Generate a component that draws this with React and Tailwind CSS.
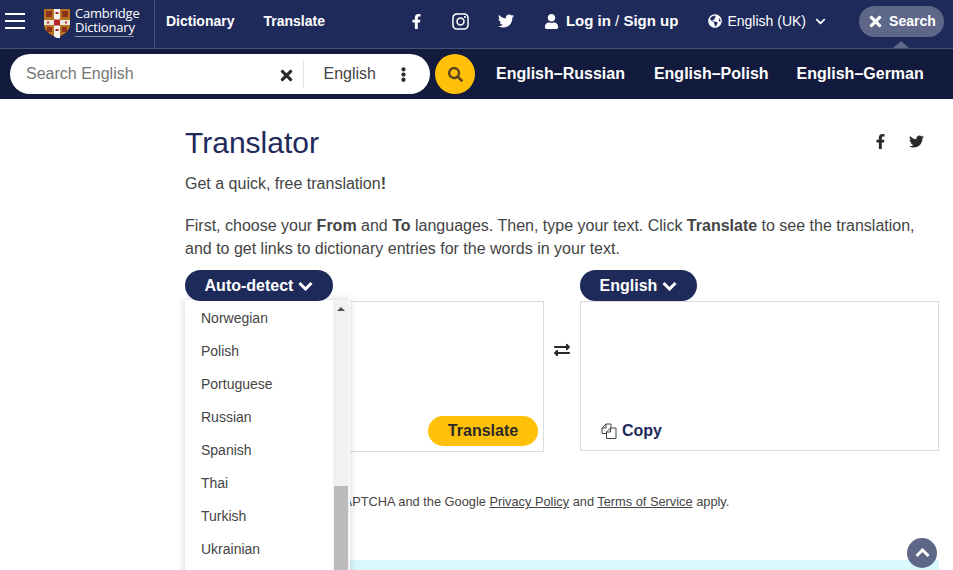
import { FaFacebookF, FaInstagram, FaTwitter, FaUser, FaGlobeAmericas, FaTimes, FaSearch, FaEllipsisV, FaExchangeAlt, FaChevronDown } from 'react-icons/fa';

const LANGUAGES = ['Norwegian', 'Polish', 'Portuguese', 'Russian', 'Spanish', 'Thai', 'Turkish', 'Ukrainian'];

const Crest = () => (
    <svg width="26" height="29" viewBox="0 0 26 29">
        <path d="M0 0H26V16C26 22 19 26 13 29C7 26 0 22 0 16Z" fill="#b8731f" />
        <path d="M0 11H26V16H0Z" fill="#ece7df" />
        <path d="M10 0H16V29H13L10 27.5Z" fill="#f6f3ee" />
        <path d="M10 10.500H16V16.500H10Z" fill="#b3262c" />
        <path d="M2 2H8V8H2ZM18 2H24V8H18ZM3 18H8V23H3ZM18 18H23V23H18Z" fill="#8f2f1c" />
        <path d="M11.500 3H14.500V5H11.500ZM11.500 20H14.500V22H11.500ZM3 12.500H5V14.500H3ZM21 12.500H23V14.500H21Z" fill="#b3262c" />
    </svg>
);

const CopyIcon = () => (
    <svg width="16" height="16" viewBox="0 0 16 16" fill="none" stroke="#444" strokeWidth="1">
        <path d="M1 10.500V5L5 1H10V5" />
        <path d="M5 1V5H1" />
        <path d="M1 10.500H5" />
        <path d="M5.500 15.500V9L9.500 5H15V15.500Z" fill="#fff" />
        <path d="M9.500 5V9H5.500" />
    </svg>
);

// thick chevron, the icon pack ones are too thin here
const Chevron = ({ up }) => (
    <svg width="15" height="10" viewBox="0 0 15 10" fill="none" stroke="#fff" strokeWidth="3" className={up ? 'rotate-180' : ''}>
        <path d="M1.500 2L7.500 8L13.500 2" />
    </svg>
);

const Header = () => (
    <header className="h-[49px] bg-[#1e2a5a] border-b border-[#46507a] flex text-white">
        <div className="w-[155px] shrink-0 flex items-center border-r border-[#46507a] pl-[5px] pb-[6px]">
            <div className="w-5 flex flex-col gap-[5px]">
                <div className="h-0.5 bg-white"></div>
                <div className="h-0.5 bg-white"></div>
                <div className="h-0.5 bg-white"></div>
            </div>
            <div className="ml-[19px] mt-[5px]"><Crest /></div>
            <div className="ml-[5px] font-['Open_Sans',sans-serif] text-[13px] leading-[14px] tracking-[-0.2px]">
                <div>Cambridge</div>
                <div className="border-b border-[#8a8fa0] pb-0.5 w-[59px]">Dictionary</div>
            </div>
        </div>
        <nav className="flex-1 flex items-center pb-[6px]">
            <a className="ml-[11px] text-sm font-bold">Dictionary</a>
            <a className="ml-[29px] text-sm font-bold">Translate</a>
            <FaFacebookF className="ml-[84px] text-[15px]" />
            <FaInstagram className="ml-[27px] text-[19px]" />
            <FaTwitter className="ml-[28px] text-[16px]" />
            <FaUser className="ml-[30px] text-[15px]" />
            <span className="ml-[7px] text-[15px] font-bold">Log in <span className="font-normal">/</span> Sign up</span>
            <FaGlobeAmericas className="ml-[30px] text-sm" />
            <span className="ml-[5px] text-sm">English (UK)</span>
            <FaChevronDown className="ml-[9px] text-[11px]" />
            <div className="relative ml-[33px]">
                <button className="w-[85px] h-[31px] rounded-full bg-[#5f6788] flex items-center pl-[8px] gap-[5px] text-sm font-bold">
                    <FaTimes className="text-[17px]" />
                    Search
                </button>
                <div className="absolute left-[34px] top-[35px] w-0 h-0 border-x-[8px] border-x-transparent border-b-[7px] border-b-[#5f6788]"></div>
            </div>
        </nav>
    </header>
);

const SearchBar = () => (
    <div className="h-[50px] bg-[#121a3e] flex items-center pl-[10px] text-white">
        <div className="w-[420px] h-10 bg-white rounded-full flex items-center text-[#444]">
            <span className="ml-4 text-base text-[#767676]">Search English</span>
            <FaTimes className="ml-auto mt-[3px] text-[17px] text-[#292929]" />
            <div className="ml-[8px] w-px h-7 bg-[#e3e3e3]"></div>
            <span className="ml-5 text-base">English</span>
            <FaEllipsisV className="ml-5 mr-[19px] text-[15px] text-[#292929]" />
        </div>
        <div className="ml-[5px] w-10 h-10 rounded-full bg-[#ffc107] flex items-center justify-center">
            <FaSearch className="text-[15px] text-[#5a4320]" />
        </div>
        <a className="ml-[21px] text-base font-bold">English–Russian</a>
        <a className="ml-[29px] text-base font-bold">English–Polish</a>
        <a className="ml-[28px] text-base font-bold">English–German</a>
    </div>
);

const LangButton = ({ label, width }) => (
    <button className={`relative z-20 h-[31px] ${width} rounded-full bg-[#1e2a5a] text-white text-base font-bold flex items-center justify-center gap-[5px]`}>
        {label}
        <Chevron />
    </button>
);

const LangDropdown = () => (
    <div className="absolute left-0 top-[30px] w-[165px] h-[280px] bg-white shadow-[0_0_8px_rgba(0,0,0,0.18)] flex overflow-hidden z-10">
        <ul className="flex-1 pl-4 pt-[1px]">
            {LANGUAGES.map(lang => (
                <li key={lang} className="h-[33px] flex items-center text-sm text-[#444]">{lang}</li>
            ))}
        </ul>
        <div className="w-[16px] mr-px bg-[#f1f1f1] flex flex-col">
            <div className="h-[186px] flex justify-center pt-[7px]">
                <div className="w-0 h-0 border-x-[4px] border-x-transparent border-b-[4px] border-b-[#505050]"></div>
            </div>
            <div className="flex-1 bg-[#bcbcbc] mx-[1px]"></div>
        </div>
    </div>
);

const Translator = () => (
    <main className="pl-[185px] pr-[14px] relative text-[#444]">
        <div className="flex items-center justify-between h-[46px] mt-[21px]">
            <h1 className="text-[30px] text-[#1e2a5a] leading-none">Translator</h1>
            <div className="flex items-center gap-[21px] pr-[15px] mb-[4px] text-[#292929]">
                <FaFacebookF className="text-[15px]" />
                <FaTwitter className="text-[15px]" />
            </div>
        </div>
        <p className="mt-[6px] text-base leading-6">Get a quick, free translation<b>!</b></p>
        <p className="mt-[18px] text-base leading-[23px]">
            First, choose your <b>From</b> and <b>To</b> languages. Then, type your text. Click <b>Translate</b> to see the translation, and to get links to dictionary entries for the words in your text.
        </p>
        <div className="mt-[10px] flex">
            <div className="relative w-[359px]">
                <LangButton label="Auto-detect" width="w-[148px]" />
                <LangDropdown />
                <div className="h-[151px] border border-[#dcdcdc] flex items-end justify-end p-[5px]">
                    <button className="w-[110px] h-[30px] rounded-full bg-[#ffc107] text-base font-bold text-[#292929]">Translate</button>
                </div>
            </div>
            <div className="w-[36px] flex justify-center pt-[72px]">
                <FaExchangeAlt className="text-base text-[#292929]" />
            </div>
            <div className="w-[359px]">
                <LangButton label="English" width="w-[117px]" />
                <div className="h-[150px] border border-[#dcdcdc] flex items-end pl-5 pb-[7px]">
                    <span className="flex items-center gap-[5px] text-base font-bold text-[#1e2a5a]">
                        <CopyIcon />
                        Copy
                    </span>
                </div>
            </div>
        </div>
        <p className="mt-[42px] text-[12.8px] text-[#444] leading-4">
            This site is protected by reCAPTCHA and the Google <u>Privacy Policy</u> and <u>Terms of Service</u> apply.
        </p>
        <div className="mt-[50px] h-[40px] bg-[#d9f9fd]"></div>
    </main>
);

const App = () => (
    <div className="relative h-[570px] overflow-hidden bg-white font-['Liberation_Sans',sans-serif]">
        <Header />
        <SearchBar />
        <Translator />
        <div className="absolute left-[907px] top-[538px] w-[30px] h-[30px] rounded-full bg-[#5f6788] flex items-center justify-center">
            <Chevron up />
        </div>
    </div>
);

export default App;
